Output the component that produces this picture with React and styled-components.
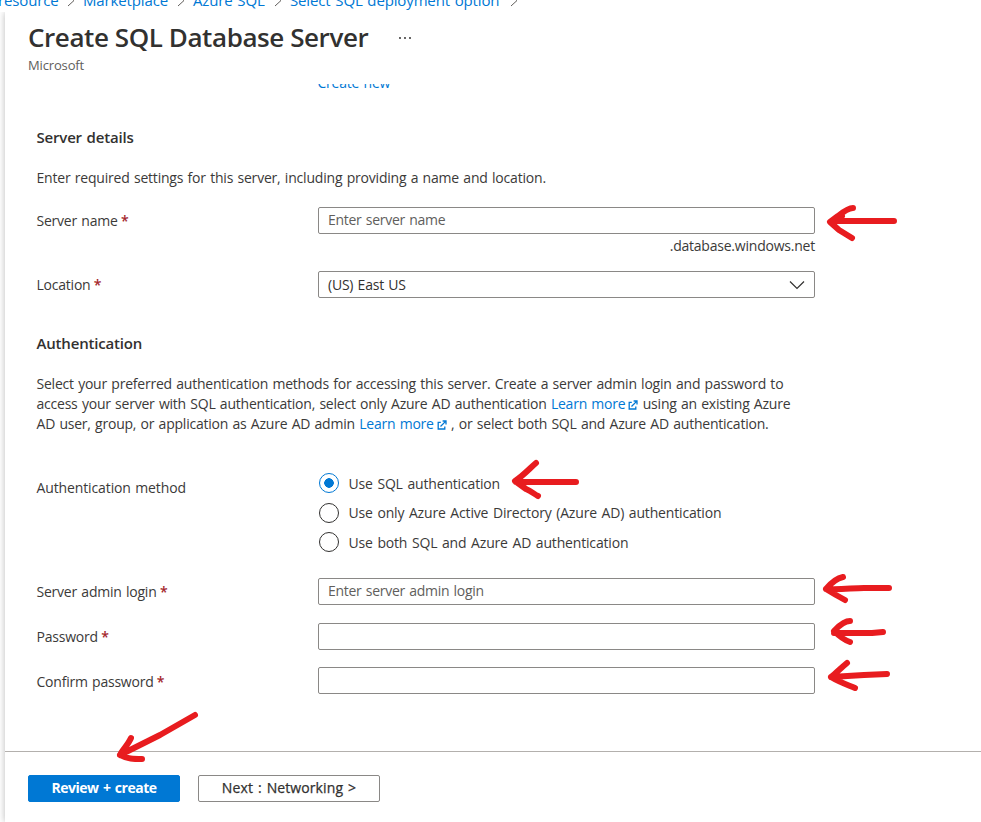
import React, { useState } from 'react';
import styled, { createGlobalStyle } from 'styled-components';

const arrows = [
  'M853 208C848 208 843 212 838 216L830 222L839 230L852 238M836 221H894M831 222L842 216',
  'M536 463C530 468 524 475 515 481L526 489C531 491 534 494 538 496M516 482H576',
  'M843 577C838 578 831 583 826 589L836 595L845 600M826 589C841 590 852 588 864 588H889',
  'M850 621C843 621 837 628 834 631C838 635 844 640 850 642M834 633H872L883 632',
  'M847 663C841 668 836 673 831 677C839 682 848 685 855 688M831 677L864 675L887 674',
  'M195 715L160 735L146 742L120 755M131 738C128 745 122 750 120 755C127 759 134 759 142 759',
];

const methods = [
  'Use SQL authentication',
  'Use only Azure Active Directory (Azure AD) authentication',
  'Use both SQL and Azure AD authentication',
];

export default function CreateServerPage() {
  const [method, setMethod] = useState(0);

  return (
    <Container>
      <GlobalStyle />
      <Breadcrumb>
        <Crumb $width={58}>resource</Crumb>
        <CrumbArrow />
        <Crumb $width={85}>Marketplace</Crumb>
        <CrumbArrow />
        <Crumb $width={72}>Azure SQL</Crumb>
        <CrumbArrow />
        <Crumb $width={211}>Select SQL deployment option</Crumb>
        <CrumbArrow />
      </Breadcrumb>
      <Blade>
        <Header>
          <TitleRow>
            <Title>Create SQL Database Server</Title>
            <More viewBox="0 0 14 4">
              <circle cx="2" cy="2" r="0.9" />
              <circle cx="7" cy="2" r="0.9" />
              <circle cx="12" cy="2" r="0.9" />
            </More>
          </TitleRow>
          <Subtitle>Microsoft</Subtitle>
        </Header>
        <Form>
          <CreateNew>Create new</CreateNew>
          <SectionTitle $top={34}>Server details</SectionTitle>
          <Text $top={21} $spacing="-0.2px">Enter required settings for this server, including providing a name and location.</Text>
          <Field $top={19}>
            <Label>Server name <Required>*</Required></Label>
            <Input placeholder="Enter server name" />
          </Field>
          <Suffix>.database.windows.net</Suffix>
          <Field $top={15}>
            <Label>Location <Required>*</Required></Label>
            <Select>
              <span>(US) East US</span>
              <svg width="16" height="10" viewBox="0 0 16 10"><path d="M1 1.5L8 8.5L15 1.5" /></svg>
            </Select>
          </Field>
          <SectionTitle $top={35}>Authentication</SectionTitle>
          <Text $top={21} $spacing="-0.22px">
            Select your preferred authentication methods for accessing this server. Create a server admin login and password to
            <br />
            access your server with SQL authentication, select only Azure AD authentication <LearnMore /> using an existing Azure
            <br />
            AD user, group, or application as Azure AD admin <LearnMore /> , or select both SQL and Azure AD authentication.
          </Text>
          <RadioField>
            <Label>Authentication method</Label>
            <RadioGroup>
              {methods.map((option, i) => (
                <Option key={option} onClick={() => setMethod(i)}>
                  <Radio $checked={method === i} />
                  <span>{option}</span>
                </Option>
              ))}
            </RadioGroup>
          </RadioField>
          <Field $top={24}>
            <Label>Server admin login <Required>*</Required></Label>
            <Input placeholder="Enter server admin login" />
          </Field>
          <Field $top={18}>
            <Label>Password <Required>*</Required></Label>
            <Input type="password" />
          </Field>
          <Field $top={17}>
            <Label $drop={2}>Confirm password <Required>*</Required></Label>
            <Input type="password" />
          </Field>
        </Form>
        <Footer>
          <Button $primary $width={152}>Review + create</Button>
          <Button $width={182}>Next : Networking &gt;</Button>
        </Footer>
      </Blade>
      <Annotations viewBox="0 0 981 822">
        {arrows.map((d) => <path key={d} d={d} />)}
      </Annotations>
    </Container>
  );
}

function CrumbArrow() {
  return (
    <Chevron viewBox="0 0 8 12"><path d="M1 0.5L7 6L1 11.5" /></Chevron>
  );
}

function LearnMore() {
  return (
    <Link>
      Learn more
      <svg width="10" height="10" viewBox="0 0 10 10">
        <path d="M3.8 2.4H1.2V9H7.8V6.4M3.5 6.5L8.6 1.4M5.6 1H9V4.4" />
      </svg>
    </Link>
  );
}

const GlobalStyle = createGlobalStyle`
  * {
    box-sizing: border-box;
  }
  body {
    margin: 0;
    background: #fff;
    color: #323130;
    font-family: 'Open Sans', 'Noto Sans', sans-serif;
    font-size: 14px;
    line-height: 20px;
  }
`

const Container = styled.div`
  position: relative;
  width: 981px;
  height: 822px;
  overflow: hidden;
  display: flex;
  flex-direction: column;
`

const Breadcrumb = styled.div`
  display: flex;
  height: 12px;
  flex-shrink: 0;
  align-items: flex-end;
  overflow: hidden;
  color: #0078d4;
  font-size: 15px;
`

const Crumb = styled.span`
  width: ${(p) => p.$width}px;
  height: 22px;
  flex-shrink: 0;
  white-space: nowrap;
  letter-spacing: -0.14px;
  word-spacing: 1px;
  &:first-child {
    text-indent: -2px;
  }
`

const Chevron = styled.svg`
  width: 8px;
  height: 13px;
  flex-shrink: 0;
  margin: 0 8px 5px 9px;
  fill: none;
  stroke: #605e5c;
`

const Blade = styled.div`
  flex: 1;
  min-height: 0;
  margin-left: 5px;
  background: #fff;
  box-shadow: 0 0 7px rgba(0, 0, 0, 0.28);
  clip-path: inset(0 0 0 -5px);
  display: flex;
  flex-direction: column;
`

const Header = styled.div`
  height: 72px;
  padding: 7px 23px 0;
`

const TitleRow = styled.div`
  display: flex;
  align-items: center;
`

const Title = styled.h1`
  margin: 0;
  width: 370px;
  font-size: 26px;
  font-weight: 600;
  line-height: 36px;
  letter-spacing: -0.42px;
  white-space: nowrap;
`

const More = styled.svg`
  width: 14px;
  height: 4px;
  margin-top: 2px;
  fill: #201f1e;
`

const Subtitle = styled.div`
  margin-top: 1px;
  font-size: 13px;
  line-height: 18px;
  color: #605e5c;
  letter-spacing: -0.15px;
`

const Form = styled.div`
  flex: 1;
  min-height: 0;
  overflow: hidden;
  padding-left: 31.5px;
  letter-spacing: -0.22px;
  word-spacing: 0.9px;
`

const CreateNew = styled.div`
  height: 20px;
  margin: -11px 0 0 281px;
  color: #0078d4;
`

const SectionTitle = styled.h2`
  margin: ${(p) => p.$top}px 0 0;
  font-size: 15px;
  font-weight: 600;
  line-height: 20px;
  letter-spacing: -0.18px;
`

const Text = styled.div`
  margin-top: ${(p) => p.$top}px;
  color: #3b3a39;
  letter-spacing: ${(p) => p.$spacing};
  white-space: nowrap;
`

const Field = styled.div`
  display: flex;
  align-items: center;
  height: 27px;
  margin-top: ${(p) => p.$top}px;
`

const Label = styled.label`
  width: 281.5px;
  flex-shrink: 0;
  padding-top: ${(p) => p.$drop || 0}px;
  color: #3b3a39;
`

const Required = styled.span`
  margin-left: -1px;
  color: #a4262c;
  font-weight: 600;
`

const Input = styled.input`
  width: 497px;
  height: 27px;
  padding: 0 9px 2px;
  border: 1px solid #8a8886;
  border-radius: 2px;
  outline: none;
  font: inherit;
  letter-spacing: -0.28px;
  word-spacing: inherit;
  &::placeholder {
    color: #605e5c;
  }
`

const Select = styled.div`
  display: flex;
  align-items: center;
  justify-content: space-between;
  width: 497px;
  height: 27px;
  padding: 0 9px;
  border: 1px solid #8a8886;
  border-radius: 2px;
  svg {
    fill: none;
    stroke: #323130;
    stroke-width: 1.2;
  }
`

const Suffix = styled.div`
  width: 778.5px;
  height: 22px;
  padding-top: 2px;
  color: #3b3a39;
  text-align: right;
`

const Link = styled.a`
  color: #0078d4;
  svg {
    margin-left: 3px;
    vertical-align: -1px;
    fill: none;
    stroke: #0078d4;
    stroke-width: 1.3;
  }
`

const RadioField = styled.div`
  display: flex;
  align-items: flex-start;
  height: 81px;
  margin-top: 39px;
  ${Label} {
    margin-top: 5px;
    letter-spacing: -0.12px;
  }
`

const RadioGroup = styled.div`
  display: flex;
  flex-direction: column;
  gap: 9.5px;
`

const Option = styled.div`
  display: flex;
  align-items: center;
  height: 20px;
  gap: 9.5px;
  padding-left: 1px;
  color: #3b3a39;
  letter-spacing: -0.17px;
  word-spacing: 1.2px;
  white-space: nowrap;
  span:last-child {
    padding-top: 1px;
  }
`

const Radio = styled.span`
  width: 20px;
  height: 20px;
  border: 1px solid ${(p) => (p.$checked ? '#0078d4' : '#323130')};
  border-radius: 50%;
  background: ${(p) => (p.$checked ? 'radial-gradient(circle, #0078d4 4.5px, #fff 5px)' : '#fff')};
`

const Footer = styled.div`
  display: flex;
  gap: 18px;
  height: 71px;
  padding: 23px 23px 0;
  border-top: 1px solid #b3b0ad;
`

const Button = styled.button`
  width: ${(p) => p.$width}px;
  height: 27px;
  padding: 0 0 2px;
  border: 1px solid ${(p) => (p.$primary ? '#0078d4' : '#8a8886')};
  border-radius: 2px;
  background: ${(p) => (p.$primary ? '#0078d4' : '#fff')};
  color: ${(p) => (p.$primary ? '#fff' : '#323130')};
  font: inherit;
  font-weight: ${(p) => (p.$primary ? 700 : 500)};
  letter-spacing: ${(p) => (p.$primary ? '-0.48px' : '0.1px')};
  word-spacing: 1.2px;
  -webkit-text-stroke: ${(p) => (p.$primary ? 0 : '0.25px')};
`

// hand-drawn pointers lying over the form
const Annotations = styled.svg`
  position: absolute;
  inset: 0;
  width: 981px;
  height: 822px;
  pointer-events: none;
  fill: none;
  stroke: #e81c1f;
  stroke-width: 6;
  stroke-linecap: round;
  stroke-linejoin: round;
`
